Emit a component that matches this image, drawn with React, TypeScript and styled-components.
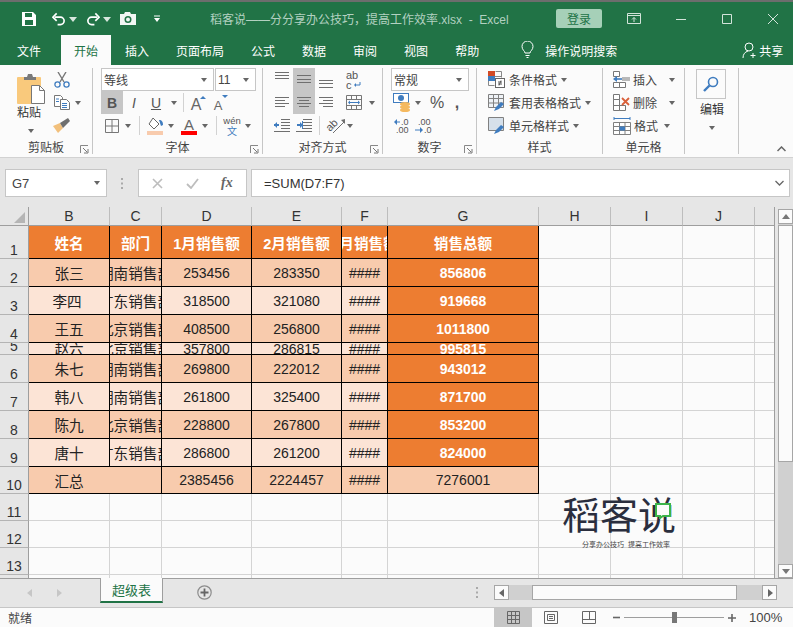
import React from "react";
import styled, { createGlobalStyle } from "styled-components";

const GlobalStyle = createGlobalStyle`
  html, body { margin: 0; padding: 0; background: #e6e6e6; }
  body { font-family: "Liberation Sans", "Noto Sans CJK SC", sans-serif; color: #444; }
  * { box-sizing: border-box; }
`;

const GREEN = "#217346";
const BLUE = "#3f7cbf";
const GRAY = "#6f6f6f";
const COLS = ["B", "C", "D", "E", "F", "G", "H", "I", "J", ""];
const ROW_HEIGHTS = [33, 28, 28, 28, 12, 28, 28, 28, 28, 27, 27, 27, 27, 27];

const rows = [
  ["张三", "湖南销售部", "253456", "283350", "####", "856806"],
  ["李四 ", "广东销售部", "318500", "321080", "####", "919668"],
  ["王五", "北京销售部", "408500", "256800", "####", "1011800"],
  ["赵六", "北京销售部", "357800", "286815", "####", "995815"],
  ["朱七", "湖南销售部", "269800", "222012", "####", "943012"],
  ["韩八", "湖南销售部", "261800", "325400", "####", "871700"],
  ["陈九", "北京销售部", "228800", "267800", "####", "853200"],
  ["唐十", "广东销售部", "286800", "261200", "####", "824000"],
];

const Window = styled.div`
  width: 793px;
  height: 627px;
  display: flex;
  flex-direction: column;
  overflow: hidden;
  background: #e6e6e6;
`;

const TitleBar = styled.div`
  height: 35px;
  flex: none;
  display: flex;
  align-items: center;
  background: ${GREEN};
  border-top: 2px solid #6d6d6d;
  overflow: hidden;
`;

const Quick = styled.div`
  width: 210px;
  flex: none;
  display: flex;
  align-items: center;
  padding-left: 21px;
`;

const QuickSlot = styled.div<{ $w: number }>`
  width: ${(p) => p.$w}px;
  flex: none;
  display: flex;
  align-items: center;
  justify-content: center;
`;

const Title = styled.div`
  width: 346px;
  flex: none;
  font-size: 12px;
  color: #b3d1c1;
  white-space: pre;
`;

const Login = styled.div`
  width: 46px;
  height: 19px;
  flex: none;
  display: flex;
  align-items: center;
  justify-content: center;
  font-size: 12px;
  color: ${GREEN};
  background: #a6d0b8;
  border-radius: 2px;
`;

const WinBtn = styled.div<{ $w: number; $ml?: number }>`
  width: ${(p) => p.$w}px;
  flex: none;
  margin-left: ${(p) => p.$ml ?? 0}px;
  display: flex;
  justify-content: center;
`;

const TabStrip = styled.div`
  height: 30px;
  flex: none;
  display: flex;
  align-items: stretch;
  gap: 1px;
  padding-left: 4px;
  background: ${GREEN};
`;

const Tab = styled.div<{ $active?: boolean; $mr?: number }>`
  padding: 0 13px;
  margin-right: ${(p) => p.$mr ?? 0}px;
  display: flex;
  align-items: center;
  font-size: 12px;
  color: ${(p) => (p.$active ? GREEN : "#fff")};
  background: ${(p) => (p.$active ? "#fbfbfb" : "transparent")};
`;

const Search = styled.div`
  display: flex;
  align-items: center;
  gap: 11px;
  margin-left: 28px;
  font-size: 12px;
  color: #fff;
`;

const Share = styled.div`
  display: flex;
  align-items: center;
  gap: 2px;
  margin-left: 124px;
  font-size: 12px;
  color: #fff;
`;

const Ribbon = styled.div`
  height: 93px;
  flex: none;
  display: flex;
  align-items: flex-start;
  padding-top: 3px;
  background: #fbfbfb;
  border-bottom: 1px solid #d2d2d2;
  position: relative;
`;

const Group = styled.div<{ $w: number }>`
  width: ${(p) => p.$w}px;
  height: 86px;
  flex: none;
  display: flex;
  flex-direction: column;
  border-right: 1px solid #c6c6c6;
`;

const GroupBody = styled.div<{ $pl?: number }>`
  height: 69px;
  flex: none;
  padding-left: ${(p) => p.$pl ?? 8}px;
`;

const GroupFoot = styled.div`
  flex: 1;
  display: flex;
  align-items: center;
  justify-content: center;
  padding-top: 4px;
  font-size: 12px;
  line-height: 14px;
  color: #444;
  position: relative;
`;

const Launcher = styled.svg`
  position: absolute;
  right: 3px;
  bottom: 1px;
`;

const ToolRow = styled.div`
  height: 23px;
  display: flex;
  align-items: stretch;
`;

const Tool = styled.div<{ $w: number; $active?: boolean; $ml?: number }>`
  width: ${(p) => p.$w}px;
  margin-left: ${(p) => p.$ml ?? 0}px;
  flex: none;
  display: flex;
  align-items: center;
  justify-content: center;
  background: ${(p) => (p.$active ? "#c6c6c6" : "transparent")};
  color: #555;
`;

const Glyph = styled.span<{ $size: number; $bold?: boolean; $italic?: boolean; $under?: boolean }>`
  font-size: ${(p) => p.$size}px;
  line-height: 1;
  font-weight: ${(p) => (p.$bold ? 700 : 400)};
  font-style: ${(p) => (p.$italic ? "italic" : "normal")};
  text-decoration: ${(p) => (p.$under ? "underline" : "none")};
  color: #555;
`;

const Sep = styled.div<{ $ml: number; $mr: number }>`
  width: 1px;
  flex: none;
  margin: 2px ${(p) => p.$mr}px 2px ${(p) => p.$ml}px;
  background: #d2d2d2;
`;

const Caret = styled.span`
  width: 0;
  height: 0;
  flex: none;
  display: inline-block;
  border-left: 3.5px solid transparent;
  border-right: 3.5px solid transparent;
  border-top: 4px solid #666;
`;

const Combo = styled.div<{ $w: number; $ml?: number }>`
  width: ${(p) => p.$w}px;
  height: 23px;
  flex: none;
  margin-left: ${(p) => p.$ml ?? 0}px;
  display: flex;
  align-items: center;
  justify-content: space-between;
  padding: 0 6px 0 2px;
  font-size: 12px;
  color: #444;
  background: #fff;
  border: 1px solid #c6c6c6;
`;

const ClipRow = styled.div`
  display: flex;
`;

const PasteCol = styled.div`
  width: 43px;
  margin-left: 9px;
  flex: none;
  display: flex;
  flex-direction: column;
  align-items: center;
  padding-top: 5px;
`;

const PasteLabel = styled.div`
  font-size: 12px;
  line-height: 14px;
  margin: 2px 0 9px -3px;
  color: #333;
`;

const LinkRow = styled.div`
  height: 23px;
  display: flex;
  align-items: center;
  gap: 4px;
  font-size: 12px;
  color: #444;
`;

const CellAction = styled(LinkRow)<{ $gap: number }>`
  gap: 3px;
  ${Caret} { margin-left: ${(p) => p.$gap}px; }
`;

const EditBox = styled.div`
  width: 30px;
  height: 30px;
  margin: 1px 0 0 11px;
  display: flex;
  align-items: center;
  justify-content: center;
  border: 1px solid #c6c6c6;
`;

const EditLabel = styled.div`
  width: 54px;
  display: flex;
  flex-direction: column;
  align-items: center;
  gap: 9px;
  margin: 4px 0 0 0;
  font-size: 12px;
  line-height: 14px;
  color: #333;
`;

const Collapse = styled.svg`
  position: absolute;
  right: 7px;
  bottom: 5px;
`;

const FormulaBar = styled.div`
  height: 49px;
  flex: none;
  display: flex;
  padding: 11px 3px 10px 5px;
`;

const NameBox = styled.div`
  width: 102px;
  flex: none;
  display: flex;
  align-items: center;
  justify-content: space-between;
  padding: 0 6px;
  font-size: 13px;
  color: #444;
  background: #fff;
  border: 1px solid #c6c6c6;
`;

const FormulaDots = styled.div`
  width: 31px;
  flex: none;
  display: flex;
  align-items: center;
  justify-content: center;
`;

const FormulaBtns = styled.div`
  width: 109px;
  flex: none;
  display: flex;
  align-items: center;
  justify-content: space-around;
  padding: 0 2px;
  background: #fff;
  border: 1px solid #c6c6c6;
`;

const FxGlyph = styled.span`
  font-family: "Liberation Serif", serif;
  font-size: 14px;
  font-style: italic;
  font-weight: 700;
  color: #666;
`;

const FormulaInput = styled.div`
  flex: 1;
  margin-left: 4px;
  display: flex;
  align-items: center;
  justify-content: space-between;
  padding: 0 5px 0 12px;
  font-size: 13px;
  color: #333;
  background: #fff;
  border: 1px solid #c6c6c6;
`;

const SheetArea = styled.div`
  flex: none;
  height: 371px;
  display: flex;
`;

const Grid = styled.div`
  width: 775px;
  flex: none;
  display: grid;
  grid-template-columns: 29px 81px 52px 90px 90px 46px 151px 72px 72px 72px 20px;
  grid-template-rows: 19px ${ROW_HEIGHTS.map((h) => `${h}px`).join(" ")};
  overflow: hidden;
  position: relative;
  background: #fbfbfb;
  border-right: 1px solid #9e9e9e;
`;

const Corner = styled.div`
  background: #e6e6e6;
  border-right: 1px solid #9e9e9e;
  border-bottom: 1px solid #9e9e9e;
  display: flex;
  align-items: flex-end;
  justify-content: flex-end;
  padding: 0 3px 2px 0;
`;

const ColHead = styled.div<{ $last?: boolean }>`
  background: #e6e6e6;
  border-right: ${(p) => (p.$last ? "none" : "1px solid #bdbdbd")};
  border-bottom: 1px solid #9e9e9e;
  display: flex;
  align-items: center;
  justify-content: center;
  font-size: 14px;
  line-height: 16px;
  color: #333;
`;

const RowHead = styled.div`
  background: #e6e6e6;
  border-right: 1px solid #9e9e9e;
  border-bottom: 1px solid #b4b4b4;
  display: flex;
  align-items: flex-end;
  justify-content: center;
  overflow: hidden;
  font-size: 14px;
  line-height: 16px;
  color: #333;
`;

const Cell = styled.div<{ $bg: string; $fg?: string; $bold?: boolean; $span?: number; $pr?: number }>`
  grid-column: span ${(p) => p.$span ?? 1};
  min-width: 0;
  display: flex;
  align-items: center;
  justify-content: center;
  overflow: hidden;
  white-space: pre;
  padding-right: ${(p) => p.$pr ?? 0}px;
  font-size: 14.6px;
  font-weight: ${(p) => (p.$bold ? 700 : 400)};
  color: ${(p) => p.$fg ?? "#222"};
  background: ${(p) => p.$bg};
  border-right: 1px solid #000;
  border-bottom: 1px solid #000;
`;

const NumText = styled.span`
  font-size: 14px;
`;

const Blank = styled.div<{ $last?: boolean }>`
  border-right: ${(p) => (p.$last ? "none" : "1px solid #d4d4d4")};
  border-bottom: 1px solid #d4d4d4;
`;

const Logo = styled.div`
  position: absolute;
  left: 562px;
  top: 286px;
  width: 116px;
  pointer-events: none;
`;

const LogoName = styled.div`
  font-size: 38px;
  line-height: 46px;
  letter-spacing: 0;
  color: #2a2e3e;
  white-space: nowrap;
`;

const LogoMark = styled.svg`
  position: absolute;
  left: 93px;
  top: 10px;
`;

const LogoTag = styled.div`
  font-size: 7px;
  line-height: 8px;
  margin: 2px 0 0 20px;
  color: #444;
  white-space: pre;
`;

const VScroll = styled.div`
  flex: 1;
  margin-left: 3px;
  padding-top: 2px;
  display: flex;
  flex-direction: column;
`;

const VTrack = styled.div`
  flex: 1;
  background: #d0d0d0;
`;

const VThumb = styled.div`
  height: 237px;
  margin-top: 1px;
  background: #fbfbfb;
  border: 1px solid #a6a6a6;
`;

const ScrollBtn = styled.div<{ $w: number; $h: number }>`
  width: ${(p) => p.$w}px;
  height: ${(p) => p.$h}px;
  flex: none;
  display: flex;
  align-items: center;
  justify-content: center;
  background: #fbfbfb;
  border: 1px solid #a6a6a6;
`;

const SheetTabs = styled.div`
  height: 29px;
  flex: none;
  display: flex;
  align-items: flex-start;
  border-top: 1px solid #9e9e9e;
`;

const SheetNav = styled.div`
  width: 100px;
  height: 28px;
  flex: none;
  display: flex;
  align-items: center;
  gap: 21px;
  padding-left: 26px;
`;

const SheetTab = styled.div`
  width: 63px;
  height: 25px;
  margin-top: -1px;
  flex: none;
  display: flex;
  align-items: center;
  justify-content: center;
  font-size: 13px;
  color: ${GREEN};
  background: #fbfbfb;
  border-left: 1px solid #9e9e9e;
  border-right: 1px solid #9e9e9e;
  border-bottom: 2px solid ${GREEN};
`;

const AddSheet = styled.svg`
  margin: 6px 0 0 34px;
  flex: none;
`;

const Spacer = styled.div`
  flex: 1;
`;

const HScroll = styled.div`
  width: 283px;
  height: 15px;
  margin: 6px 16px 0 0;
  flex: none;
  display: flex;
  background: #d0d0d0;
`;

const HThumb = styled.div`
  width: 205px;
  margin: 0 auto 0 23px;
  background: #fbfbfb;
  border: 1px solid #a6a6a6;
`;

const StatusBar = styled.div`
  height: 20px;
  flex: none;
  display: flex;
  align-items: stretch;
  padding-left: 8px;
  font-size: 12px;
  color: #444;
  background: #fbfbfb;
  border-top: 1px solid #c6c6c6;
`;

const StatusText = styled.div`
  width: 486px;
  flex: none;
  display: flex;
  align-items: center;
`;

const ViewBtn = styled.div<{ $active?: boolean }>`
  width: 38px;
  flex: none;
  display: flex;
  align-items: center;
  justify-content: center;
  background: ${(p) => (p.$active ? "#c6c6c6" : "transparent")};
`;

const Zoomer = styled.div`
  width: 126px;
  flex: none;
  margin-left: 5px;
  display: flex;
  align-items: center;
  gap: 4px;
`;

const ZoomTrack = styled.div`
  width: 100px;
  height: 1px;
  flex: none;
  background: #9e9e9e;
  position: relative;
`;

const ZoomThumb = styled.div`
  position: absolute;
  left: 48px;
  top: -5px;
  width: 5px;
  height: 11px;
  background: #777;
`;

const ZoomValue = styled.div`
  margin-left: 10px;
  display: flex;
  align-items: center;
  font-size: 13px;
  color: #444;
`;

const Ln = ({ d, c = GRAY, w = 1 }: { d: string; c?: string; w?: number }) => (
  <path d={d} fill="none" stroke={c} strokeWidth={w} />
);

const Paste = () => (
  <svg width="30" height="31" viewBox="0 0 30 31">
    <rect x="1" y="4" width="24" height="27" rx="1" fill="#f9c97c" />
    <path d="M8 4h3l1-3h4l1 3h3v3H8z" fill="#7a7a7a" />
    <path d="M15.5 12.5h8l5 5v13h-13z" fill="#fff" stroke="#777" />
    <path d="M23.5 12.5v5h5" fill="none" stroke="#777" />
  </svg>
);

const Scissors = () => (
  <svg width="16" height="16" viewBox="0 0 16 16">
    <Ln d="M4 0l6 10M12 0L6 10" c="#777" w={1.4} />
    <circle cx="3.5" cy="12.5" r="2.6" fill="none" stroke={BLUE} strokeWidth="1.3" />
    <circle cx="12.5" cy="12.5" r="2.6" fill="none" stroke={BLUE} strokeWidth="1.3" />
  </svg>
);

const Copy = () => (
  <svg width="16" height="15" viewBox="0 0 16 15">
    <path d="M.5.5h6l2 2v9h-8z" fill="#fff" stroke="#777" />
    <path d="M6.5 4.5h6l3 3v7h-9z" fill="#fff" stroke="#777" />
    <Ln d="M2 4h3M2 6.5h3M8 8.5h5M8 10.5h5M8 12.5h5" c={BLUE} />
  </svg>
);

const Brush = () => (
  <svg width="17" height="15" viewBox="0 0 17 15">
    <path d="M0 8l7-3 3 5-5 5z" fill="#f2c07c" />
    <path d="M7 5l8-5 2 3-7 7z" fill="#6f6f6f" />
  </svg>
);

const Borders = () => (
  <svg width="14" height="14" viewBox="0 0 14 14">
    <path d="M.5.5h13v13H.5zM7 .5v13M.5 7h13" fill="none" stroke="#777" />
  </svg>
);

const Fill = () => (
  <svg width="17" height="18" viewBox="0 0 17 18">
    <path d="M6 1l6 6-5 5-5-5z" fill="#fff" stroke="#666" />
    <path d="M12 3c3 0 4 2 4 5l-2 1-1-3z" fill={BLUE} />
    <rect x="0" y="14" width="16" height="4" fill="#f8cbad" />
  </svg>
);

const FontColor = () => (
  <svg width="16" height="18" viewBox="0 0 16 18">
    <text x="8" y="12.5" textAnchor="middle" fontSize="15" fill="#666" fontFamily="Liberation Sans">A</text>
    <rect x="0" y="14" width="16" height="4" fill="#f00" />
  </svg>
);

const Wen = () => (
  <svg width="18" height="20" viewBox="0 0 18 20">
    <text x="9" y="8" textAnchor="middle" fontSize="9.5" fill="#555" fontFamily="Liberation Sans">wén</text>
    <text x="9" y="19" textAnchor="middle" fontSize="10" fill={BLUE} fontFamily="Noto Sans CJK SC">文</text>
  </svg>
);

const GrowFont = ({ up }: { up: boolean }) => (
  <svg width="20" height="20" viewBox="0 0 20 20">
    <text x="8" y="17" textAnchor="middle" fontSize={up ? 16 : 13} fill="#666" fontFamily="Liberation Sans">A</text>
    <path d={up ? "M12 6l3-3 3 3z" : "M12 2l3 3 3-3z"} fill={BLUE} />
  </svg>
);

const Lines = ({ ys, short }: { ys: number[]; short?: "left" | "right" | "center" }) => (
  <svg width="14" height="23" viewBox="0 0 14 23">
    {ys.map((y, i) => {
      const isShort = short && i % 2 === 1;
      const x1 = !isShort ? 0 : short === "right" ? 4 : short === "center" ? 2 : 0;
      const x2 = !isShort ? 14 : short === "left" ? 10 : short === "center" ? 12 : 14;
      return <line key={y} x1={x1} x2={x2} y1={y + 0.5} y2={y + 0.5} stroke={GRAY} />;
    })}
  </svg>
);

const Wrap = () => (
  <svg width="16" height="20" viewBox="0 0 16 20">
    <text x="0" y="9" fontSize="11" fill="#555" fontFamily="Liberation Sans">ab</text>
    <text x="0" y="19" fontSize="11" fill="#555" fontFamily="Liberation Sans">c</text>
    <Ln d="M14 12v3H9" c={BLUE} />
    <path d="M10 13v4l-2-2z" fill={BLUE} />
  </svg>
);

const Merge = () => (
  <svg width="16" height="15" viewBox="0 0 16 15">
    <path d="M.5.5h15v14H.5zM.5 4.5h15M.5 10.5h15M5.5.5v4M10.5.5v4M5.5 10.5v4M10.5 10.5v4" fill="none" stroke="#777" />
    <Ln d="M3 7.5h10" c={BLUE} />
    <path d="M2 7.5l2-2v4zM14 7.5l-2-2v4z" fill={BLUE} />
  </svg>
);

const Indent = ({ flip }: { flip?: boolean }) => (
  <svg width="16" height="13" viewBox="0 0 16 13">
    <Ln d="M7 .5h9M7 3.5h9M7 6.5h9M7 9.5h9M0 12.5h16" c={GRAY} />
    <Ln d={flip ? "M1 6h5" : "M0 6h5"} c={BLUE} w={2} />
    <path d={flip ? "M6 2l0 8 1 0 0-8z M7 6l-3-3v6z" : "M0 6l3-3v6z"} fill={BLUE} />
  </svg>
);

const Orient = () => (
  <svg width="20" height="17" viewBox="0 0 20 17">
    <text x="0" y="0" fontSize="11" fill="#555" fontFamily="Liberation Sans" transform="translate(4 15) rotate(-45)">ab</text>
    <Ln d="M7 16L19 4" c={GRAY} />
    <path d="M19 2v5l-4-4z" fill={GRAY} />
  </svg>
);

const Currency = () => (
  <svg width="18" height="19" viewBox="0 0 18 19">
    <rect x=".5" y=".5" width="15" height="9" fill="#fff" stroke={BLUE} />
    <circle cx="8" cy="5" r="3" fill={BLUE} />
    <ellipse cx="12" cy="11" rx="5" ry="2" fill="#f5b95f" />
    <ellipse cx="12" cy="14" rx="5" ry="2" fill="#f5b95f" />
    <ellipse cx="12" cy="17" rx="5" ry="2" fill="#f5b95f" />
  </svg>
);

const Decimal = ({ more }: { more: boolean }) => (
  <svg width="20" height="16" viewBox="0 0 20 16">
    <text x={more ? 4 : 8} y="7" fontSize="9" fill="#555" fontFamily="Liberation Sans">{more ? ".00" : ".0"}</text>
    <text x={more ? 10 : 3} y="15" fontSize="9" fill="#555" fontFamily="Liberation Sans">{more ? ".0" : ".00"}</text>
    <Ln d={more ? "M1 12h7" : "M2 4h5"} c={BLUE} />
    <path d={more ? "M9 12l-3-3v6z" : "M1 4l3-3v6z"} fill={BLUE} />
  </svg>
);

const CondFormat = () => (
  <svg width="17" height="17" viewBox="0 0 17 17">
    <rect x="0" y="0" width="7" height="5" fill="#d24a26" />
    <rect x="0" y="5" width="7" height="5" fill="#3f7cbf" />
    <path d="M7.5.5h6v6M7 5.5h6M.5 10v4.5h6" fill="none" stroke="#888" />
    <rect x="7.5" y="7.5" width="9" height="9" fill="#fff" stroke="#666" />
    <Ln d="M10 11h4M10 13h4M13 9.5l-2 5" c="#555" />
  </svg>
);

const TableFormat = ({ plain }: { plain?: boolean }) => (
  <svg width="17" height="18" viewBox="0 0 17 18">
    <path
      d={plain ? "M.5.5h15v13H.5z" : "M.5.5h15v13H.5zM.5 4.5h15M.5 9h15M5.5.5v13M10.5.5v13"}
      fill={plain ? "#d6e0ea" : "#eef2f6"}
      stroke="#808080"
    />
    <path d="M6 17l2-4 5-5 3 2-5 5z" fill={BLUE} />
  </svg>
);

const InsertIcon = () => (
  <svg width="17" height="17" viewBox="0 0 17 17">
    <path d="M.5.5h6v5h-6zM.5 11.5h6v5h-6zM6.5 11.5h6v5h-6z" fill="#fff" stroke="#777" />
    <rect x="9" y="6" width="8" height="4" fill="#b8b8b8" />
    <Ln d="M2 8h7" c={BLUE} w={1.6} />
    <path d="M0 8l4-3v6z" fill={BLUE} />
  </svg>
);

const DeleteIcon = () => (
  <svg width="17" height="17" viewBox="0 0 17 17">
    <path d="M.5.5h6v5h-6zM.5 11.5h6v5h-6zM6.5 11.5h6v5h-6zM.5 5.5h6v6h-6z" fill="#fff" stroke="#777" />
    <Ln d="M9 4l7 7M16 4l-7 7" c="#d9603a" w={1.8} />
  </svg>
);

const FormatIcon = () => (
  <svg width="18" height="18" viewBox="0 0 18 18">
    <Ln d="M1 1.5h16M1 0v3M17 0v3" c={BLUE} />
    <path d="M.5 5.5h17v12H.5zM.5 9.5h17M.5 13.5h17M6.5 5.5v12M12 5.5v12" fill="#fff" stroke="#808080" />
    <rect x="6.5" y="9.5" width="5.5" height="4" fill={BLUE} />
  </svg>
);

const Magnifier = () => (
  <svg width="16" height="16" viewBox="0 0 16 16">
    <circle cx="10" cy="6" r="4.5" fill="none" stroke={BLUE} strokeWidth="1.6" />
    <path d="M6.5 9.5L1 15" stroke={BLUE} strokeWidth="2.4" />
  </svg>
);

const Launch = () => (
  <Launcher width="9" height="9" viewBox="0 0 9 9">
    <Ln d="M.5 8V.5H8" c="#888" />
    <path d="M3 3l4 4M8 4v4H4" fill="none" stroke="#777" />
  </Launcher>
);

const Triangle = ({ dir, color = "#777" }: { dir: "up" | "down" | "left" | "right"; color?: string }) => {
  const d = { up: "M0 6l4-5 4 5z", down: "M0 2l4 5 4-5z", left: "M6 0L1 4l5 4z", right: "M2 0l5 4-5 4z" }[dir];
  return (
    <svg width="8" height="8" viewBox="0 0 8 8">
      <path d={d} fill={color} />
    </svg>
  );
};

const App = () => (
  <Window>
    <GlobalStyle />
    <TitleBar>
      <Quick>
        <QuickSlot $w={16}>
          <svg width="16" height="16" viewBox="0 0 16 16">
            <path fillRule="evenodd" d="M1 1h11l3 3v11H1zM4 2v4h7V2zM4 9v5h8V9z" fill="#fff" />
          </svg>
        </QuickSlot>
        <QuickSlot $w={14} style={{ marginLeft: 15 }}>
          <svg width="15" height="14" viewBox="0 0 15 14">
            <path d="M3 5h6a4 4 0 0 1 0 8H6" fill="none" stroke="#fff" strokeWidth="1.8" />
            <path d="M5 1L1 5l4 4" fill="none" stroke="#fff" strokeWidth="1.8" />
          </svg>
        </QuickSlot>
        <QuickSlot $w={14}>
          <Triangle dir="down" color="#d7e6dd" />
        </QuickSlot>
        <QuickSlot $w={14} style={{ marginLeft: 6 }}>
          <svg width="15" height="14" viewBox="0 0 15 14">
            <path d="M12 5H6a4 4 0 0 0 0 8h3" fill="none" stroke="#fff" strokeWidth="1.8" />
            <path d="M10 1l4 4-4 4" fill="none" stroke="#fff" strokeWidth="1.8" />
          </svg>
        </QuickSlot>
        <QuickSlot $w={14}>
          <Triangle dir="down" color="#d7e6dd" />
        </QuickSlot>
        <QuickSlot $w={16} style={{ marginLeft: 6 }}>
          <svg width="16" height="13" viewBox="0 0 16 13">
            <path fillRule="evenodd" d="M0 2h4l1-2h5l1 2h5v11H0zM8 4a3.5 3.5 0 1 0 0 7 3.5 3.5 0 0 0 0-7z" fill="#f2f7f4" />
            <circle cx="8" cy="7.5" r="2" fill="#f2f7f4" />
          </svg>
        </QuickSlot>
        <QuickSlot $w={10} style={{ marginLeft: 16 }}>
          <svg width="8" height="8" viewBox="0 0 8 8">
            <path d="M1 1h6" stroke="#fff" />
            <path d="M1 3l3 4 3-4z" fill="#fff" />
          </svg>
        </QuickSlot>
      </Quick>
      <Title>稻客说——分分享办公技巧，提高工作效率.xlsx  -  Excel</Title>
      <Login>登录</Login>
      <WinBtn $w={40} $ml={12}>
        <svg width="14" height="11" viewBox="0 0 14 11">
          <path d="M.5.5h13v10H.5zM.5 2.5h13" fill="none" stroke="#d3e4da" />
          <path d="M7 9V4.5M5 6.5l2-2 2 2" fill="none" stroke="#d3e4da" />
        </svg>
      </WinBtn>
      <WinBtn $w={46} $ml={4}>
        <svg width="10" height="10" viewBox="0 0 10 10">
          <path d="M0 5.5h10" stroke="#d3e4da" />
        </svg>
      </WinBtn>
      <WinBtn $w={46}>
        <svg width="10" height="10" viewBox="0 0 10 10">
          <path d="M.5.5h9v9h-9z" fill="none" stroke="#d3e4da" />
        </svg>
      </WinBtn>
      <WinBtn $w={46}>
        <svg width="10" height="10" viewBox="0 0 10 10">
          <path d="M0 0l10 10M10 0L0 10" stroke="#d3e4da" />
        </svg>
      </WinBtn>
    </TitleBar>

    <TabStrip>
      <Tab $mr={6}>文件</Tab>
      <Tab $active>开始</Tab>
      <Tab>插入</Tab>
      <Tab>页面布局</Tab>
      <Tab>公式</Tab>
      <Tab>数据</Tab>
      <Tab>审阅</Tab>
      <Tab>视图</Tab>
      <Tab>帮助</Tab>
      <Search>
        <svg width="13" height="18" viewBox="0 0 13 18">
          <path d="M4 12c0-2-3-3-3-6.500a5.500 5.500 0 0 1 11 0c0 3.500-3 4.500-3 6.500zM4.500 14.500h4M5.500 16.500h2" fill="none" stroke="#fff" />
        </svg>
        操作说明搜索
      </Search>
      <Share>
        <svg width="15" height="17" viewBox="0 0 15 17">
          <circle cx="7" cy="5" r="4" fill="none" stroke="#fff" />
          <path d="M1 16c0-4 2-6 5-7M11 11v5M8.500 13.500h5" fill="none" stroke="#fff" />
        </svg>
        共享
      </Share>
    </TabStrip>

    <Ribbon>
      <Group $w={93}>
        <ClipRow>
          <PasteCol>
            <Paste />
            <PasteLabel>粘贴</PasteLabel>
            <Caret />
          </PasteCol>
          <div>
            <ToolRow><Tool $w={19}><Scissors /></Tool></ToolRow>
            <ToolRow>
              <Tool $w={19}><Copy /></Tool>
              <Tool $w={12} $ml={1}><Caret /></Tool>
            </ToolRow>
            <ToolRow><Tool $w={19}><Brush /></Tool></ToolRow>
          </div>
        </ClipRow>
        <GroupFoot>剪贴板<Launch /></GroupFoot>
      </Group>

      <Group $w={170}>
        <GroupBody>
          <ToolRow>
            <Combo $w={113}>等线<Caret /></Combo>
            <Combo $w={41} $ml={1}>11<Caret /></Combo>
          </ToolRow>
          <ToolRow>
            <Tool $w={22} $active><Glyph $size={14} $bold>B</Glyph></Tool>
            <Tool $w={22}><Glyph $size={14} $italic>I</Glyph></Tool>
            <Tool $w={22}><Glyph $size={14} $under>U</Glyph></Tool>
            <Tool $w={13}><Caret /></Tool>
            <Sep $ml={3} $mr={3} />
            <Tool $w={22}><GrowFont up /></Tool>
            <Tool $w={22}><GrowFont up={false} /></Tool>
          </ToolRow>
          <ToolRow>
            <Tool $w={22}><Borders /></Tool>
            <Tool $w={10}><Caret /></Tool>
            <Sep $ml={6} $mr={3} />
            <Tool $w={24}><Fill /></Tool>
            <Tool $w={8}><Caret /></Tool>
            <Tool $w={24} $ml={2}><FontColor /></Tool>
            <Tool $w={8}><Caret /></Tool>
            <Sep $ml={7} $mr={4} />
            <Tool $w={22}><Wen /></Tool>
            <Tool $w={10}><Caret /></Tool>
          </ToolRow>
        </GroupBody>
        <GroupFoot>字体<Launch /></GroupFoot>
      </Group>

      <Group $w={120}>
        <GroupBody>
          <ToolRow>
            <Tool $w={22}><Lines ys={[4, 7, 10]} /></Tool>
            <Tool $w={22} $active><Lines ys={[7, 11, 14]} /></Tool>
            <Tool $w={22}><Lines ys={[12, 15, 19]} /></Tool>
            <Tool $w={23} $ml={5}><Wrap /></Tool>
          </ToolRow>
          <ToolRow>
            <Tool $w={22}><Lines ys={[6, 9, 12, 15]} short="left" /></Tool>
            <Tool $w={22} $active><Lines ys={[6, 9, 12, 15]} short="center" /></Tool>
            <Tool $w={22}><Lines ys={[6, 9, 12, 15]} short="right" /></Tool>
            <Tool $w={23} $ml={5}><Merge /></Tool>
            <Tool $w={14}><Caret /></Tool>
          </ToolRow>
          <ToolRow>
            <Tool $w={22}><Indent /></Tool>
            <Tool $w={22}><Indent flip /></Tool>
            <Sep $ml={4} $mr={5} />
            <Tool $w={21}><Orient /></Tool>
            <Tool $w={8}><Caret /></Tool>
          </ToolRow>
        </GroupBody>
        <GroupFoot>对齐方式<Launch /></GroupFoot>
      </Group>

      <Group $w={94}>
        <GroupBody>
          <ToolRow><Combo $w={78}>常规<Caret /></Combo></ToolRow>
          <ToolRow>
            <Tool $w={22}><Currency /></Tool>
            <Tool $w={10}><Caret /></Tool>
            <Tool $w={26} $ml={1}><Glyph $size={16}>%</Glyph></Tool>
            <Tool $w={14}><Glyph $size={16} $bold>,</Glyph></Tool>
          </ToolRow>
          <ToolRow>
            <Tool $w={23}><Decimal more={false} /></Tool>
            <Tool $w={20}><Decimal more /></Tool>
          </ToolRow>
        </GroupBody>
        <GroupFoot>数字<Launch /></GroupFoot>
      </Group>

      <Group $w={126}>
        <GroupBody $pl={11}>
          <LinkRow><CondFormat />条件格式<Caret /></LinkRow>
          <LinkRow><TableFormat />套用表格格式<Caret /></LinkRow>
          <LinkRow><TableFormat plain />单元格样式<Caret /></LinkRow>
        </GroupBody>
        <GroupFoot>样式</GroupFoot>
      </Group>

      <Group $w={82}>
        <GroupBody $pl={10}>
          <CellAction $gap={9}><InsertIcon />插入<Caret /></CellAction>
          <CellAction $gap={9}><DeleteIcon />删除<Caret /></CellAction>
          <CellAction $gap={3}><FormatIcon />格式<Caret /></CellAction>
        </GroupBody>
        <GroupFoot>单元格</GroupFoot>
      </Group>

      <Group $w={54}>
        <EditBox><Magnifier /></EditBox>
        <EditLabel>编辑<Caret /></EditLabel>
      </Group>

      <Collapse width="9" height="6" viewBox="0 0 9 6">
        <path d="M.5 5l4-4 4 4" fill="none" stroke="#666" strokeWidth="1.5" />
      </Collapse>
    </Ribbon>

    <FormulaBar>
      <NameBox>G7<Caret /></NameBox>
      <FormulaDots>
        <svg width="3" height="11" viewBox="0 0 3 11">
          <path d="M0 0h2v2H0zM0 4.500h2v2H0zM0 9h2v2H0z" fill="#aaa" />
        </svg>
      </FormulaDots>
      <FormulaBtns>
        <svg width="11" height="11" viewBox="0 0 11 11">
          <path d="M1 1l9 9M10 1l-9 9" stroke="#bdbdbd" strokeWidth="1.6" />
        </svg>
        <svg width="13" height="11" viewBox="0 0 13 11">
          <path d="M1 6l4 4 7-9" fill="none" stroke="#bdbdbd" strokeWidth="1.8" />
        </svg>
        <FxGlyph>fx</FxGlyph>
      </FormulaBtns>
      <FormulaInput>
        =SUM(D7:F7)
        <svg width="9" height="6" viewBox="0 0 9 6">
          <path d="M.5 1l4 4 4-4" fill="none" stroke="#666" strokeWidth="1.3" />
        </svg>
      </FormulaInput>
    </FormulaBar>

    <SheetArea>
      <Grid>
        <Corner>
          <svg width="11" height="11" viewBox="0 0 11 11">
            <path d="M11 0v11H0z" fill="#b5b5b5" />
          </svg>
        </Corner>
        {COLS.map((c, i) => (
          <ColHead key={c || "K"} $last={i === COLS.length - 1}>{c}</ColHead>
        ))}

        <RowHead>1</RowHead>
        {["姓名", "部门", "1月销售额", "2月销售额", "3月销售额"].map((h) => (
          <Cell key={h} $bg="#ed7d31" $fg="#fff" $bold>{h}</Cell>
        ))}
        <Cell $bg="#ed7d31" $fg="#fff" $bold>销售总额</Cell>
        <Blank /><Blank /><Blank /><Blank $last />

        {rows.map((r, i) => {
          const bg = i % 2 === 0 ? "#f8cbad" : "#fce4d6";
          return (
            <React.Fragment key={r[0]}>
              <RowHead>{i + 2}</RowHead>
              <Cell $bg={bg}>{r[0]}</Cell>
              <Cell $bg={bg}>{r[1]}</Cell>
              <Cell $bg={bg}><NumText>{r[2]}</NumText></Cell>
              <Cell $bg={bg}><NumText>{r[3]}</NumText></Cell>
              <Cell $bg={bg}><NumText>{r[4]}</NumText></Cell>
              <Cell $bg="#ed7d31" $fg="#fff" $bold><NumText>{r[5]}</NumText></Cell>
              <Blank /><Blank /><Blank /><Blank $last />
            </React.Fragment>
          );
        })}

        <RowHead>10</RowHead>
        <Cell $bg="#f8cbad" $span={2} $pr={52}>汇总</Cell>
        <Cell $bg="#f8cbad"><NumText>2385456</NumText></Cell>
        <Cell $bg="#f8cbad"><NumText>2224457</NumText></Cell>
        <Cell $bg="#f8cbad"><NumText>####</NumText></Cell>
        <Cell $bg="#f8cbad"><NumText>7276001</NumText></Cell>
        <Blank /><Blank /><Blank /><Blank $last />

        {[11, 12, 13, 14].map((n) => (
          <React.Fragment key={n}>
            <RowHead>{n}</RowHead>
            {COLS.map((c, i) => (
              <Blank key={c || "K"} $last={i === COLS.length - 1} />
            ))}
          </React.Fragment>
        ))}

        <Logo>
          <LogoName>稻客说</LogoName>
          <LogoMark width="16" height="16" viewBox="0 0 16 16">
            <path d="M1 1h14v12H8l-3 2v-2H1z" fill="#fbfbfb" stroke="#3cb44a" strokeWidth="2" />
          </LogoMark>
          <LogoTag>分享办公技巧  提高工作效率</LogoTag>
        </Logo>
      </Grid>
      <VScroll>
        <ScrollBtn $w={15} $h={15}><Triangle dir="up" /></ScrollBtn>
        <VTrack>
          <VThumb />
        </VTrack>
        <ScrollBtn $w={15} $h={14}><Triangle dir="down" /></ScrollBtn>
      </VScroll>
    </SheetArea>

    <SheetTabs>
      <SheetNav>
        <Triangle dir="left" color="#c6c6c6" />
        <Triangle dir="right" color="#c6c6c6" />
      </SheetNav>
      <SheetTab>超级表</SheetTab>
      <AddSheet width="15" height="15" viewBox="0 0 15 15">
        <circle cx="7.500" cy="7.500" r="6.700" fill="none" stroke="#8c8c8c" strokeWidth="1.200" />
        <path d="M7.500 3.500v8M3.500 7.500h8" stroke="#666" strokeWidth="1.800" />
      </AddSheet>
      <Spacer />
      <svg width="3" height="11" viewBox="0 0 3 11" style={{ margin: "8px 15px 0 0" }}>
        <path d="M0 0h2v2H0zM0 4.500h2v2H0zM0 9h2v2H0z" fill="#aaa" />
      </svg>
      <HScroll>
        <ScrollBtn $w={15} $h={15}><Triangle dir="left" color="#666" /></ScrollBtn>
        <HThumb />
        <ScrollBtn $w={15} $h={15}><Triangle dir="right" color="#666" /></ScrollBtn>
      </HScroll>
    </SheetTabs>

    <StatusBar>
      <StatusText>就绪</StatusText>
      <ViewBtn $active>
        <svg width="13" height="13" viewBox="0 0 13 13">
          <path d="M.5.5h12v12H.5zM4.500.5v12M8.500.5v12M.5 4.500h12M.5 8.500h12" fill="none" stroke="#666" />
        </svg>
      </ViewBtn>
      <ViewBtn>
        <svg width="14" height="13" viewBox="0 0 14 13">
          <path d="M.5.5h13v12H.5zM3.500 3.500h7v6h-7zM5 5.500h4M5 7.500h4" fill="none" stroke="#666" />
        </svg>
      </ViewBtn>
      <ViewBtn>
        <svg width="14" height="13" viewBox="0 0 14 13">
          <path d="M.5.5h13v12H.5zM.5 8.500h13M7.500.5v8" fill="none" stroke="#666" />
        </svg>
      </ViewBtn>
      <Zoomer>
        <svg width="7" height="7" viewBox="0 0 7 7">
          <path d="M0 3.500h7" stroke="#666" strokeWidth="1.600" />
        </svg>
        <ZoomTrack><ZoomThumb /></ZoomTrack>
        <svg width="8" height="8" viewBox="0 0 8 8">
          <path d="M0 4h8M4 0v8" stroke="#666" strokeWidth="1.600" />
        </svg>
      </Zoomer>
      <ZoomValue>100%</ZoomValue>
    </StatusBar>
  </Window>
);

export default App;
